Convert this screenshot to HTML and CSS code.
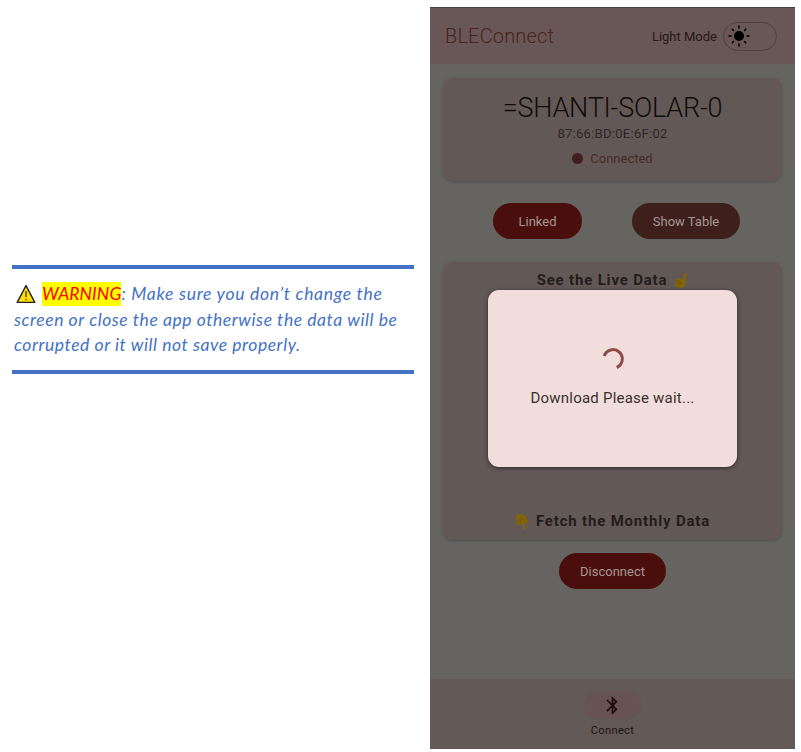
FILE: index.html
```html
<!DOCTYPE html>
<html lang="en">
<head>
<meta charset="utf-8">
<title>BLEConnect</title>
<link rel="stylesheet" href="styles.css">
</head>
<body>
<main class="page">
  <aside class="warning">
    <p class="line line-1"><svg class="warn-icon" viewBox="0 0 20 20" width="20" height="20"><path d="M10 1.6 18.8 18.4H1.2Z" fill="#ffdf00" stroke="#222" stroke-width="1.4" stroke-linejoin="round"/><path d="M10 7v6M10 14.7v1.6" stroke="#222" stroke-width="1.2"/></svg><mark>WARNING</mark>: Make sure you don’t change the</p>
    <p class="line line-2">screen or close the app otherwise the data will be</p>
    <p class="line line-3">corrupted or it will not save properly.</p>
  </aside>
  <section class="phone">
    <header class="topbar">
      <h1>BLEConnect</h1>
      <span class="mode">Light Mode</span>
      <span class="switch"><svg width="22" height="22" viewBox="-11 -11 22 22"><circle r="5"/><path d="M0-10v2M0 8v2M-10 0h2M8 0h2M-6.6-6.6l1 1M5.6 5.6l1 1M-6.6 6.6l1-1M5.6-5.6l1-1" stroke="#000" stroke-width="1.6" stroke-linecap="round"/></svg></span>
    </header>
    <div class="content">
      <article class="card device">
        <h2>=SHANTI-SOLAR-0</h2>
        <p class="mac">87:66:BD:0E:6F:02</p>
        <p class="status"><i class="dot"></i><span>Connected</span></p>
      </article>
      <div class="actions">
        <button class="btn linked">Linked</button>
        <button class="btn table">Show Table</button>
      </div>
      <article class="card data">
        <h3><span class="live">See the Live Data</span><svg class="up" width="14" height="17" viewBox="0 0 14 17"><path d="M8.7 8.2 9.6 2.2Q9.9.8 11 .9q1.4.1 1.2 1.6L11.5 10Q11.3 16 6.2 16 1 16 1 11.2V8.5Q1.4 7 3 7.2 4 5.9 5.4 6.8 7.6 6.3 8.7 8.2Z" fill="#846408"/><path d="M3.2 8v3M5.7 7.5v3.6M2.4 12.1q3.5.6 5.9-1.3" fill="none" stroke="#6b5209" stroke-width=".7"/></svg></h3>
        <h3><svg class="down" width="15" height="17" viewBox="0 0 15 17"><path d="M7.3 8.8 7.5 15q.1 1.4 1.4 1.4 1.2 0 1.2-1.4L10 10q3.6.2 4-1.8-.1-1-1.4-1.5L10.7 3Q9 1 5 1 1 1.5 1 5v4.5Q1 11 2.5 11q1 1 2.5 0 1.8 0 2.3-2.2Z" fill="#846408"/><path d="M3 6.5V10M5.2 6v4M3 5q3-.5 5 1l1.7 2" fill="none" stroke="#6b5209" stroke-width=".7"/></svg><span class="fetch">Fetch the Monthly Data</span></h3>
      </article>
      <button class="btn disconnect">Disconnect</button>
    </div>
    <nav class="bottom">
      <span class="pill"><svg width="24" height="24" viewBox="0 0 24 24"><path d="M17.71 7.71 12 2h-1v7.59L6.41 5 5 6.41 10.59 12 5 17.59 6.41 19 11 14.41V22h1l5.71-5.71-4.3-4.29 4.3-4.29zM13 5.83l1.88 1.88L13 9.59V5.83zm1.88 10.46L13 18.17v-3.76l1.88 1.88z" fill="#1c0d0c"/></svg></span>
      <span class="nav-label">Connect</span>
    </nav>
    <div class="modal" role="dialog">
      <svg class="spinner" width="24" height="24" viewBox="-12 -12 24 24"><path d="M-8.8-3A9.3 9.3 0 1 1 3.7 8.5" fill="none" stroke="#904a45" stroke-width="3"/></svg>
      <p class="wait">Download Please wait...</p>
    </div>
  </section>
</main>
</body>
</html>
```

FILE: styles.css
```css
* { box-sizing: border-box; }
body { margin: 0; background: #fff; font-family: Roboto, "Liberation Sans", sans-serif; }
h1, h2, h3, p { margin: 0; font-weight: 400; white-space: nowrap; }
.page { display: flex; align-items: flex-start; width: 801px; height: 752px; overflow: hidden; }
.warning {
  width: 402px; height: 109px; margin: 265px 16px 0 12px; padding: 12px 2px 0;
  border-top: 4px solid #4472c4; border-bottom: 4px solid #4472c4;
  color: #4472c4; font: italic 17.5px/25.5px Lato, sans-serif;
}
.line { height: 25.5px; letter-spacing: .56px; }
.line-1 { letter-spacing: .72px; }
.line-3 { letter-spacing: .55px; }
.warn-icon { margin: 0 6px 0 2px; vertical-align: -4px; }
mark { display: inline-block; height: 24px; line-height: 24px; letter-spacing: .1px; background: #ff0; color: #f00; }
.phone {
  position: relative; width: 365px; height: 742px; margin-top: 7px;
  display: flex; flex-direction: column; background: #656461; border-top: 1px solid #454342;
}
.topbar { height: 56px; padding: 0 18px 0 15px; display: flex; align-items: center; background: #685756; }
h1 { flex: 1; color: #482321; font-size: 20px; font-weight: 300; letter-spacing: .15px; }
.mode { color: #271817; font-size: 13px; margin-right: 6px; white-space: nowrap; }
.switch { width: 54px; height: 29px; border: 1px solid #4a4442; border-radius: 15px; display: flex; align-items: center; padding-left: 4px; }
.content { flex: 1; padding: 14px 13px 0; display: flex; flex-direction: column; align-items: center; }
.card { width: 339px; background: #625957; border-radius: 10px; box-shadow: 0 1px 3px #53504e; }
.device { height: 103px; display: flex; flex-direction: column; align-items: center; padding-top: 13px; }
h2 { height: 34px; line-height: 34px; font-size: 27px; font-weight: 300; letter-spacing: -.2px; color: #100c0a; }
.mac { height: 18px; line-height: 18px; font-size: 13px; letter-spacing: .28px; color: #302523; }
.status { display: flex; align-items: center; height: 31px; gap: 7px; font-size: 13px; color: #4b2927; }
.dot { width: 11px; height: 11px; border-radius: 50%; background: #421d1b; }
.actions { display: flex; gap: 50px; margin: 22px 0 23px 8px; }
.btn { border: 0; border-radius: 18px; height: 36px; padding: 0; color: #a59794; font: 13px Roboto, sans-serif; background: #4a0e0d; }
.linked { width: 89px; }
.table { width: 108px; background: #3e1f1c; }
.data { height: 278px; display: flex; flex-direction: column; justify-content: space-between; padding: 8px 0 9px; }
h3 { height: 20px; display: flex; justify-content: center; align-items: center; font-size: 15px; font-weight: 700; letter-spacing: .82px; color: #241c1a; }
.up { margin-left: 7px; }
.down { margin-right: 6px; }
.disconnect { width: 107px; margin-top: 13px; }
.bottom { height: 70px; background: #635957; display: flex; flex-direction: column; align-items: center; padding-top: 12px; }
.pill { width: 57px; height: 28px; border-radius: 14px; background: #665352; display: grid; place-items: center; }
.pill svg { width: 21px; height: 21px; }
.nav-label { margin-top: 4px; height: 16px; line-height: 16px; font-size: 11px; letter-spacing: .4px; color: #1c1413; }
.modal {
  position: absolute; left: 58px; top: 282px; width: 249px; height: 177px; border-radius: 11px;
  background: #f1dedc; box-shadow: 0 1px 4px #2c2827; display: flex; flex-direction: column; align-items: center; padding-top: 57px;
}
.wait { margin-top: 17px; height: 20px; line-height: 20px; font-size: 15px; letter-spacing: .22px; color: #3c302e; }
```
